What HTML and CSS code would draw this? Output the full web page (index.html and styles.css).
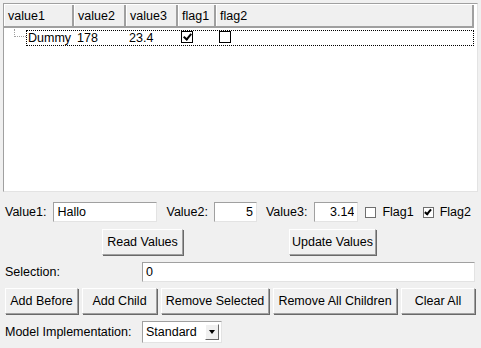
FILE: index.html
```html
<!DOCTYPE html>
<html lang="en">
<head>
    <meta charset="UTF-8">
    <title>Tree Model</title>
    <link rel="stylesheet" href="styles.css">
</head>
<body>
    <div class="tree">
        <div class="tree-head">
            <div class="th col1">value1</div>
            <div class="th col2">value2</div>
            <div class="th col3">value3</div>
            <div class="th col4">flag1</div>
            <div class="th col5">flag2</div>
        </div>
        <div class="tree-row">
            <span class="branch"></span>
            <div class="row-focus">
                <span class="td first">Dummy</span>
                <span class="td col2">178</span>
                <span class="td col3">23.4</span>
                <span class="td col4"><span class="check checked"></span></span>
                <span class="td col5"><span class="check"></span></span>
            </div>
        </div>
    </div>

    <div class="line values">
        <label>Value1:</label>
        <input class="entry e-value1" type="text" value="Hallo">
        <label class="gap">Value2:</label>
        <input class="entry e-value2 right" type="text" value="5">
        <label class="gap">Value3:</label>
        <input class="entry e-value3 right" type="text" value="3.14">
        <span class="flag"><span class="check small"></span>Flag1</span>
        <span class="flag flag2"><span class="check small checked"></span>Flag2</span>
    </div>

    <div class="line actions">
        <button class="btn b-read">Read Values</button>
        <button class="btn b-update">Update Values</button>
    </div>

    <div class="line selection">
        <label class="wide">Selection:</label>
        <input class="entry e-selection" type="text" value="0">
    </div>

    <div class="line edit-buttons">
        <button class="btn b-before">Add Before</button>
        <button class="btn b-child">Add Child</button>
        <button class="btn b-remove">Remove Selected</button>
        <button class="btn b-children">Remove All Children</button>
        <button class="btn b-clear">Clear All</button>
    </div>

    <div class="line model">
        <label class="wide">Model Implementation:</label>
        <div class="combo">
            <span class="combo-text">Standard</span>
            <span class="combo-arrow"></span>
        </div>
    </div>
</body>
</html>
```

FILE: styles.css
```css
body {
    margin: 0;
    background: #f0f0f0;
    font-family: "Liberation Sans", Arial, sans-serif;
    font-size: 12.5px;
    color: #000;
    width: 481px;
    height: 348px;
    overflow: hidden;
}
.tree {
    margin: 3px 3px 0 3px;
    height: 189px;
    background: #fff;
    border-top: 1px solid #a0a0a0;
    border-left: 1px solid #a0a0a0;
    border-right: 1px solid #e3e3e3;
    border-bottom: 1px solid #e3e3e3;
    box-sizing: border-box;
    padding-right: 3px;
}
.tree-head {
    display: flex;
    height: 24px;
    background: #f0f0f0;
    border-bottom: 2px solid #a0a0a0;
    border-top: 1px solid #ffffff;
    box-sizing: border-box;
}
.th {
    box-sizing: border-box;
    padding: 3px 4px 0 3px;
    border-right: 2px solid #a0a0a0;
    border-left: 1px solid #ffffff;
    line-height: 16px;
    white-space: nowrap;
    overflow: hidden;
}
.col1 { width: 70px; }
.col2 { width: 52px; }
.col3 { width: 52px; }
.col4 { width: 38px; }
.col5 { flex: 1; }
.tree-row {
    display: flex;
    height: 16px;
    margin-top: 2px;
}
.branch {
    margin-left: 10px;
    height: 8px;
    border-left: 1px dotted #a0a0a0;
    border-bottom: 1px dotted #a0a0a0;
    box-sizing: border-box;
    margin-top: -1px;
    width: 12px;
}
.row-focus {
    flex: 1;
    display: flex;
    border: 1px dotted #000;
    box-sizing: border-box;
    line-height: 14px;
    white-space: nowrap;
}
.td {
    padding-left: 4px;
    box-sizing: border-box;
}
.td.first {
    width: 46px;
    padding-left: 1px;
}
.check {
    display: inline-block;
    width: 12px;
    height: 12px;
    border: 1px solid #000;
    box-sizing: border-box;
    background: #fff;
    vertical-align: -1px;
    position: relative;
}
.check.checked::after {
    content: "";
    position: absolute;
    left: 3px;
    top: 0;
    width: 3px;
    height: 6px;
    border-right: 2px solid #000;
    border-bottom: 2px solid #000;
    transform: rotate(40deg);
}
.line {
    display: flex;
    align-items: center;
    padding: 0 5px;
    white-space: nowrap;
}
.values {
    margin-top: 10px;
    height: 20px;
}
.entry {
    font: inherit;
    height: 20px;
    box-sizing: border-box;
    border: 1px solid #e3e3e3;
    border-top-color: #a0a0a0;
    border-left-color: #a0a0a0;
    background: #fff;
    padding: 0 3px;
    margin: 0;
    outline: none;
}
.right { text-align: right; }
.gap { margin-left: 9px; }
.e-value1 { width: 104px; margin-left: 7px; }
.e-value2 { width: 43px; margin-left: 6px; }
.e-value3 { width: 44px; margin-left: 7px; }
.flag {
    display: flex;
    align-items: center;
    margin-left: 7px;
}
.flag2 { margin-left: 9px; }
.check.small {
    width: 11px;
    height: 11px;
    margin-right: 6px;
    border-color: #6f6f6f;
}
.check.small.checked::after {
    left: 2px;
    top: 0;
    width: 2px;
    height: 5px;
}
.actions {
    margin-top: 7px;
    padding-left: 102px;
}
.btn {
    font: inherit;
    height: 26px;
    margin: 0;
    padding: 0;
    background: #f0f0f0;
    border: 1px solid #fff;
    border-right-color: #a0a0a0;
    border-bottom-color: #a0a0a0;
    box-shadow: 1px 1px 0 #696969;
    color: #000;
    white-space: nowrap;
}
.b-read { width: 81px; }
.b-update { width: 87px; margin-left: 106px; }
.selection {
    margin-top: 7px;
}
.wide { width: 137px; }
.e-selection { width: 333px; }
.edit-buttons {
    margin-top: 6px;
    gap: 4px;
}
.b-before { width: 73px; }
.b-child { width: 75px; }
.b-remove { width: 108px; }
.b-children { width: 124px; }
.b-clear { width: 74px; }
.model {
    margin-top: 7px;
}
.combo {
    width: 80px;
    height: 22px;
    box-sizing: border-box;
    border: 1px solid #a0a0a0;
    border-right-color: #e3e3e3;
    border-bottom-color: #e3e3e3;
    background: #fff;
    display: flex;
    align-items: center;
    padding: 0 2px 0 3px;
}
.combo-text { flex: 1; }
.combo-arrow {
    width: 14px;
    height: 16px;
    background: #f0f0f0;
    border: 1px solid #fff;
    border-right-color: #696969;
    border-bottom-color: #696969;
    box-sizing: border-box;
    position: relative;
}
.combo-arrow::after {
    content: "";
    position: absolute;
    left: 3px;
    top: 5px;
    border-left: 3px solid transparent;
    border-right: 3px solid transparent;
    border-top: 4px solid #000;
}
```
